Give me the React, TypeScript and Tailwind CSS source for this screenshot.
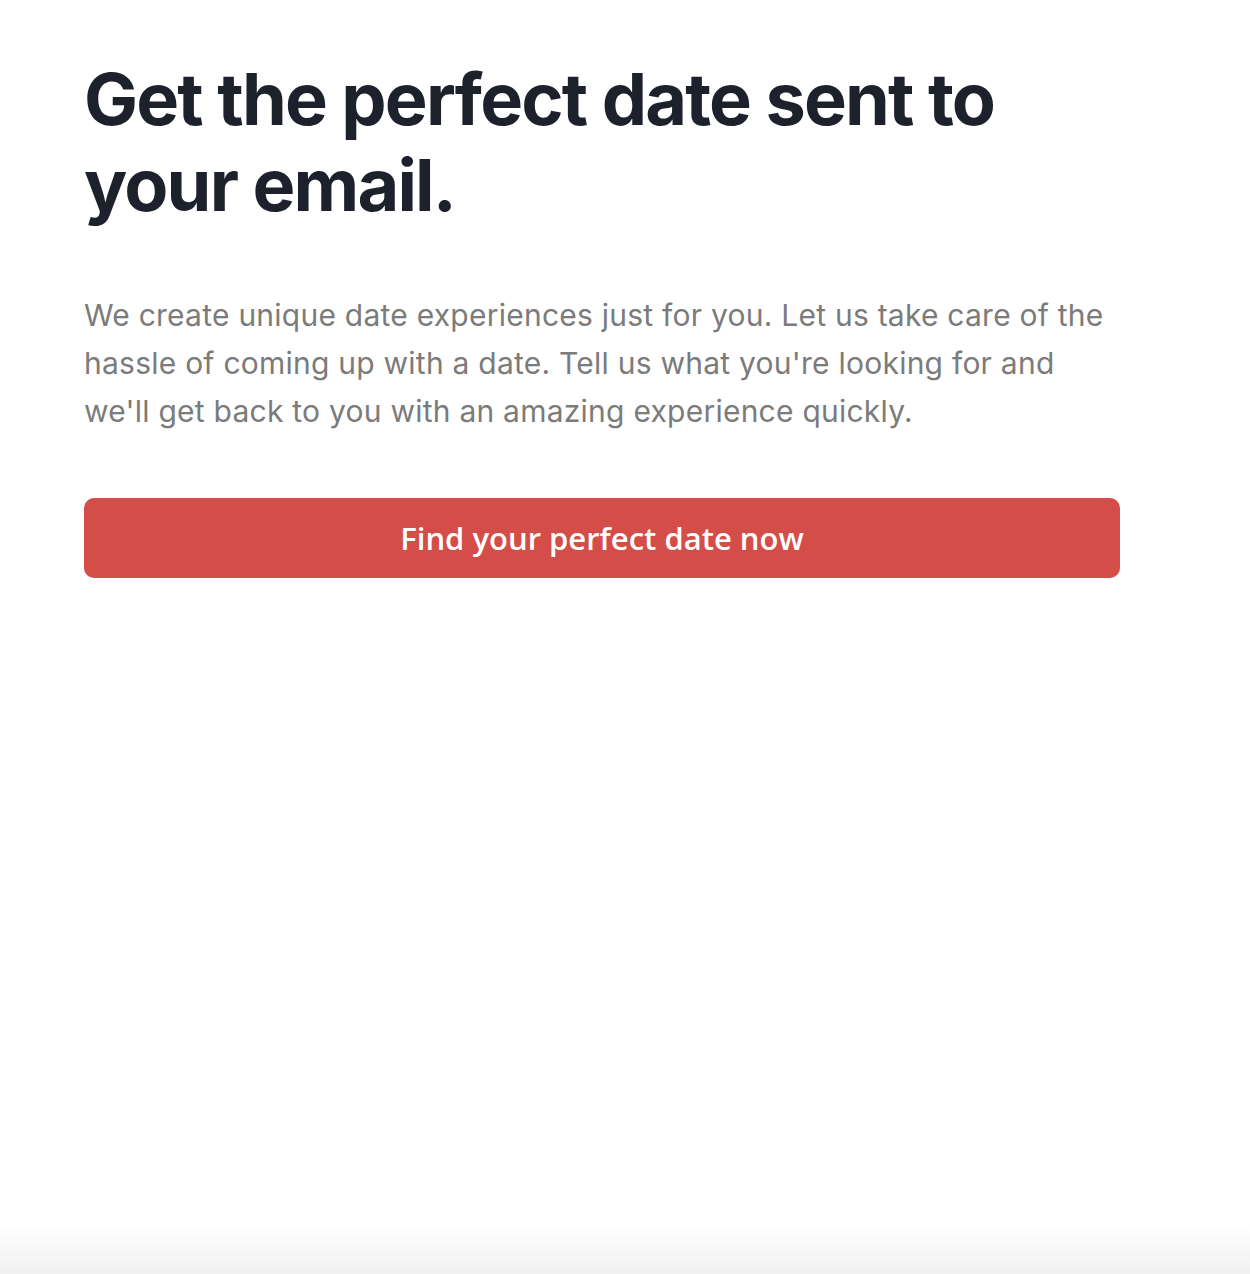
export default function App() {
	return (
		<div className="flex min-h-[1274px] flex-col bg-white font-['Inter',sans-serif]">
			<main className="w-[1036px] pl-[84px] pt-[56px] box-content">
				<h1 className="text-[72px] font-bold leading-[86px] tracking-[-0.025em] text-[#1d212c]">
					Get the perfect date sent to your email.
				</h1>
				<p className="mt-[63px] text-[30px] leading-[48px] tracking-[0.008em] text-[#7b7b7b]">
					We create unique date experiences just for you. Let us take care of the hassle of coming up with a date. Tell us
					what you're looking for and we'll get back to you with an amazing experience quickly.
				</p>
				<button
					type="button"
					className="mt-[63px] flex h-[80px] w-full items-center justify-center rounded-[10px] bg-[#d44d48] font-['Open_Sans',sans-serif] text-[31px] font-semibold text-white">
					Find your perfect date now
				</button>
			</main>
			<div className="flex-1" />
			<div className="h-[50px] bg-gradient-to-b from-white to-[#f1f1f1]" />
		</div>
	);
}
